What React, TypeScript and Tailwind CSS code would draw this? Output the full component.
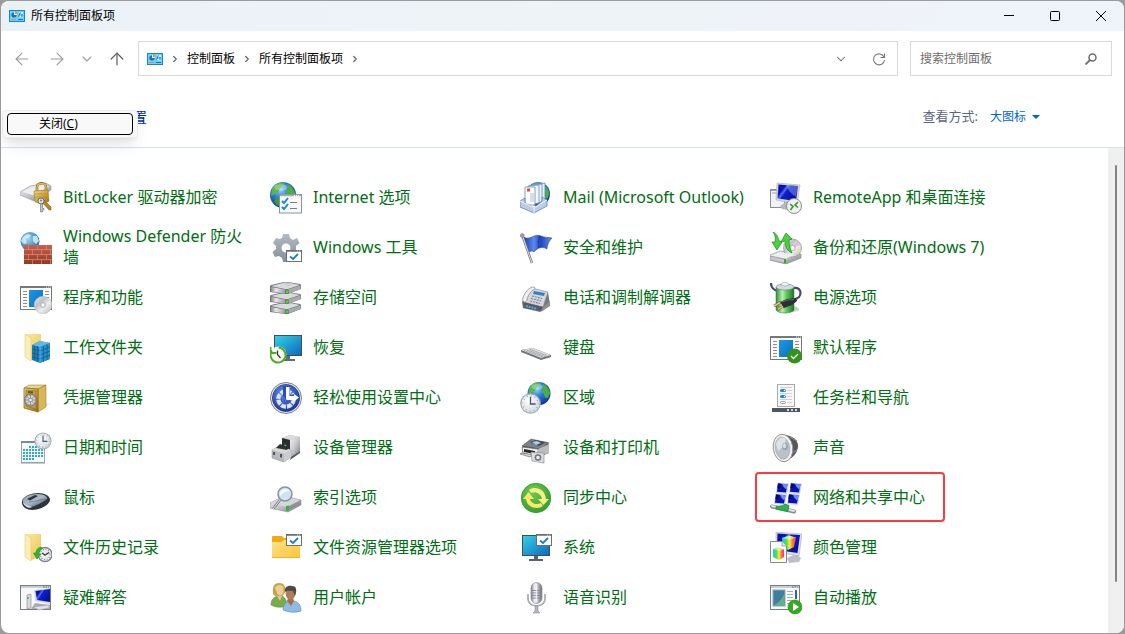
import type { ReactNode } from "react";
import { ArrowLeft, ArrowRight, ArrowUp, ChevronDown, ChevronRight } from "lucide-react";

function Icon({ children }: { children: ReactNode }) {
  return (
    <svg viewBox="0 0 32 32" className="size-8 shrink-0" aria-hidden="true">
      {children}
    </svg>
  );
}

/* Gradients shared by all icons */
function SharedDefs() {
  return (
    <svg className="absolute size-0" aria-hidden="true">
      <defs>
        <linearGradient id="silver" x1="0" y1="0" x2="1" y2="1">
          <stop offset="0" stopColor="#f4f4f6" />
          <stop offset="0.5" stopColor="#c4c5c9" />
          <stop offset="1" stopColor="#77797e" />
        </linearGradient>
        <linearGradient id="drive" x1="0" y1="0" x2="1" y2="0">
          <stop offset="0" stopColor="#8b8c90" />
          <stop offset="0.3" stopColor="#e9e9eb" />
          <stop offset="1" stopColor="#828387" />
        </linearGradient>
        <linearGradient id="steel" x1="0" y1="0" x2="0" y2="1">
          <stop offset="0" stopColor="#b3bac3" />
          <stop offset="1" stopColor="#858d98" />
        </linearGradient>
        <linearGradient id="gold" x1="0" y1="0" x2="1" y2="1">
          <stop offset="0" stopColor="#f2da83" />
          <stop offset="0.5" stopColor="#cfa63c" />
          <stop offset="1" stopColor="#94691a" />
        </linearGradient>
        <linearGradient id="folder" x1="0" y1="0" x2="1" y2="1">
          <stop offset="0" stopColor="#fde9a6" />
          <stop offset="1" stopColor="#ecc254" />
        </linearGradient>
        <linearGradient id="folderNew" x1="0" y1="0" x2="1" y2="1">
          <stop offset="0" stopColor="#ffe28a" />
          <stop offset="1" stopColor="#fcc433" />
        </linearGradient>
        <linearGradient id="screen" x1="0" y1="0" x2="1" y2="1">
          <stop offset="0" stopColor="#35d3e6" />
          <stop offset="1" stopColor="#0b67bf" />
        </linearGradient>
        <linearGradient id="navy" x1="0" y1="0" x2="1" y2="0.6">
          <stop offset="0" stopColor="#0a16a0" />
          <stop offset="0.3" stopColor="#0610b8" />
          <stop offset="0.42" stopColor="#4f74f0" />
          <stop offset="0.5" stopColor="#101fcb" />
          <stop offset="1" stopColor="#05109b" />
        </linearGradient>
        <linearGradient id="tile" x1="0" y1="0" x2="1" y2="1">
          <stop offset="0" stopColor="#1c97e6" />
          <stop offset="1" stopColor="#0b6fc4" />
        </linearGradient>
        <linearGradient id="brick" x1="0" y1="0" x2="0" y2="1">
          <stop offset="0" stopColor="#c9604c" />
          <stop offset="1" stopColor="#963724" />
        </linearGradient>
        <linearGradient id="battery" x1="0" y1="0" x2="1" y2="0">
          <stop offset="0" stopColor="#2f8d38" />
          <stop offset="0.35" stopColor="#b5f0ae" />
          <stop offset="0.6" stopColor="#5cc659" />
          <stop offset="1" stopColor="#1c7726" />
        </linearGradient>
        <linearGradient id="flag" x1="0" y1="0" x2="1" y2="0">
          <stop offset="0" stopColor="#1c3bb0" />
          <stop offset="0.35" stopColor="#5f8af0" />
          <stop offset="0.6" stopColor="#1f43bd" />
          <stop offset="1" stopColor="#6a94ee" />
        </linearGradient>
        <linearGradient id="spectrum" x1="0" y1="0" x2="1" y2="0">
          <stop offset="0" stopColor="#12d8ea" />
          <stop offset="0.3" stopColor="#3fe05c" />
          <stop offset="0.55" stopColor="#f7ee35" />
          <stop offset="0.8" stopColor="#ff6a2b" />
          <stop offset="1" stopColor="#f02bb0" />
        </linearGradient>
        <linearGradient id="disc" x1="0" y1="0" x2="1" y2="1">
          <stop offset="0" stopColor="#ededee" />
          <stop offset="0.35" stopColor="#bfc2c3" />
          <stop offset="0.6" stopColor="#eeeeef" />
          <stop offset="1" stopColor="#b0b3b5" />
        </linearGradient>
        <linearGradient id="mouse" x1="0" y1="0" x2="1" y2="1">
          <stop offset="0" stopColor="#8d9cb0" />
          <stop offset="0.5" stopColor="#aab8c8" />
          <stop offset="1" stopColor="#3d4651" />
        </linearGradient>
        <linearGradient id="mic" x1="0" y1="0" x2="1" y2="0">
          <stop offset="0" stopColor="#81818c" />
          <stop offset="0.35" stopColor="#f7f7fc" />
          <stop offset="1" stopColor="#6b6b78" />
        </linearGradient>
        <radialGradient id="globe" cx="0.4" cy="0.3" r="0.75">
          <stop offset="0" stopColor="#8fd4fa" />
          <stop offset="0.45" stopColor="#2a78d6" />
          <stop offset="1" stopColor="#0b2f8e" />
        </radialGradient>
        <radialGradient id="paleGlobe" cx="0.4" cy="0.35" r="0.7">
          <stop offset="0" stopColor="#9bd5ef" />
          <stop offset="1" stopColor="#1c6ea8" />
        </radialGradient>
        <radialGradient id="dial" cx="0.4" cy="0.35" r="0.75">
          <stop offset="0" stopColor="#ffffff" />
          <stop offset="1" stopColor="#cad4dd" />
        </radialGradient>
        <radialGradient id="access" cx="0.4" cy="0.3" r="0.8">
          <stop offset="0" stopColor="#5e8be6" />
          <stop offset="1" stopColor="#122f96" />
        </radialGradient>
        <radialGradient id="green" cx="0.4" cy="0.3" r="0.8">
          <stop offset="0" stopColor="#6ecb52" />
          <stop offset="1" stopColor="#2c9a2b" />
        </radialGradient>
      </defs>
    </svg>
  );
}

/* Small parts that several icons reuse */
function Globe({ cx, cy, r }: { cx: number; cy: number; r: number }) {
  return (
    <g transform={`translate(${cx} ${cy}) scale(${r / 12})`}>
      <circle r="12" fill="url(#globe)" />
      <path d="M-10 -6C-7 -11 -2 -12 1 -11L0 -8L-3 -6L-4 -3L-8 -1L-11 1Z" fill="#58b848" />
      <path d="M4 -10C8 -9 11 -4 11.500 0L9 5L6 4L5 0L2 -2L4 -6Z" fill="#4cae42" />
      <path d="M-7 2L-2 3L1 6L-2 11L-6 9L-8 6Z" fill="#3c9c3a" />
      <ellipse cx="-2" cy="-7" rx="6" ry="3" fill="#fff" opacity="0.3" />
    </g>
  );
}

function Clock({ cx, cy, r }: { cx: number; cy: number; r: number }) {
  return (
    <g transform={`translate(${cx} ${cy}) scale(${r / 10})`}>
      <circle r="9.500" fill="url(#dial)" stroke="#a3acb4" strokeWidth="1.200" />
      <circle r="7.500" fill="none" stroke="#8b98a5" strokeWidth="1.200" strokeDasharray="0.800 3.127" />
      <path d="M0 -6.500V0.500H5" fill="none" stroke="#44566a" strokeWidth="1.300" />
    </g>
  );
}

function CheckWindow({ x, y }: { x: number; y: number }) {
  return (
    <g transform={`translate(${x} ${y})`}>
      <rect x="0.500" y="0.500" width="15" height="11" fill="#fff" stroke="#6d6d6d" />
      <path d="M0.500 1H15.500" stroke="#6d6d6d" strokeWidth="1.500" />
      <path d="M11 1H15" stroke="#ddd" strokeDasharray="1 1" />
      <path d="M4 6.500L7 9L12 4" fill="none" stroke="#1280d6" strokeWidth="1.800" />
    </g>
  );
}

function ProgramWindow() {
  return (
    <>
      <rect x="0.500" y="4.500" width="31" height="23" fill="#fbfbfb" stroke="#777" />
      <path d="M0 5H32" stroke="#777" strokeWidth="2" />
      <path d="M26 5H31" stroke="#eee" strokeDasharray="1 1" />
      <path d="M3 9.500H7M3 12.500H7M3 15.500H7M3 18.500H7M3 21.500H7M3 24.500H7M25 9.500H29M25 12.500H29M25 15.500H29" stroke="#8d8d8d" />
      <rect x="9" y="8" width="14" height="17" fill="url(#tile)" />
    </>
  );
}

function OldFolder() {
  return (
    <>
      <path d="M5 2H21V25L11 28Z" fill="url(#folder)" />
      <path d="M5 2L11 6V29L5 25Z" fill="#fdeeb8" stroke="#e3bd5c" strokeWidth="0.500" />
    </>
  );
}

const icons: Record<string, ReactNode> = {
  bitlocker: (
    <>
      <path d="M0 10L10 4L26 1L31 4V8L14 19L0 13Z" fill="url(#silver)" stroke="#96989c" strokeWidth="0.600" />
      <path d="M2 10L11 5L26 2.500L29 5L13 13Z" fill="#edeef2" />
      <path d="M17 9V5C17 0 26 0 26 5V9" fill="none" stroke="#8a6a22" strokeWidth="2.600" />
      <path d="M17 9V5C17 0.500 26 0.500 26 5V9" fill="none" stroke="#e4c768" strokeWidth="1.200" />
      <path d="M14 9L28 8L29 19L24 22L15 20Z" fill="url(#gold)" stroke="#8f6b1c" strokeWidth="0.500" />
      <path d="M15 12H28M15 15H28" stroke="#b48a2c" strokeWidth="0.600" />
      <path d="M24 18L31 25V28H29L22 20Z" fill="#b98520" stroke="#7b5510" strokeWidth="0.500" />
      <circle cx="21" cy="19" r="3" fill="#e2e3e6" stroke="#6b6e75" />
      <circle cx="21" cy="18.500" r="1" fill="#73767c" />
      <path d="M20.500 22V30H22.500V28H24V26.500H22.500V22Z" fill="#c3c5ca" stroke="#6b6e75" strokeWidth="0.600" />
    </>
  ),
  firewall: (
    <>
      <circle cx="10" cy="9.500" r="9.500" fill="url(#paleGlobe)" />
      <path d="M3 5L7 2L11 3L9 6L6 7L7 11L4 12L1 9ZM13 4L17 4L19 9L16 12L13 9Z" fill="#d5eef8" opacity="0.850" />
      <rect x="4" y="13" width="28" height="19" fill="#d08f80" />
      <path
        d="M4 13H8.300V17.300H4ZM9 13H17.300V17.300H9ZM18 13H26.300V17.300H18ZM27 13H32V17.300H27ZM4 18H12.300V22.300H4ZM13 18H21.300V22.300H13ZM22 18H30.300V22.300H22ZM31 18H32V22.300H31ZM4 23H8.300V27.300H4ZM9 23H17.300V27.300H9ZM18 23H26.300V27.300H18ZM27 23H32V27.300H27ZM4 28H12.300V32H4ZM13 28H21.300V32H13ZM22 28H30.300V32H22ZM31 28H32V32H31Z"
        fill="url(#brick)"
      />
    </>
  ),
  programs: (
    <>
      <ProgramWindow />
      <circle cx="23" cy="23" r="8.800" fill="url(#disc)" stroke="#b9bcbd" strokeWidth="0.500" />
      <circle cx="23" cy="23" r="2.600" fill="#dadcdd" stroke="#a6a9aa" strokeWidth="0.600" />
      <circle cx="23" cy="23" r="1.200" fill="#fff" />
    </>
  ),
  workFolders: (
    <>
      <OldFolder />
      <path d="M12 13L20 9L30 11V27L20 31L12 28Z" fill="#1c7fb8" />
      <path d="M12 13L20 9L30 11L20 15Z" fill="#63b9df" />
      <path d="M20 15L30 11V27L20 31Z" fill="#2b93cb" />
      <path d="M12 17L20 19L30 15M12 21L20 23L30 19M12 25L20 27L30 23M14.500 13.500V28.500M17.500 14V30M23.500 14V29.500M27 12.500V28" fill="none" stroke="#0e5c93" strokeWidth="0.800" />
      <path d="M20 15V31" stroke="#8fd0ec" strokeWidth="0.600" />
    </>
  ),
  credentials: (
    <>
      <path d="M20 29L30 21L26 22Z" fill="#ddd" />
      <path d="M4 6L9 3H26L18 7Z" fill="#e6d494" stroke="#927425" strokeWidth="0.500" />
      <path d="M18 7L26 3V25L18 30Z" fill="#d9b658" stroke="#927425" strokeWidth="0.500" />
      <path d="M4 6L18 7V30L4 26Z" fill="url(#gold)" stroke="#7e611b" strokeWidth="0.700" />
      <path d="M6 8L16 9V27L6 24Z" fill="#c09c47" stroke="#8c6d27" strokeWidth="0.600" />
      <path d="M8 9L13 9.500V11.500L8 11Z" fill="#6c5722" />
      <circle cx="10.500" cy="18" r="6" fill="#a5a7ab" stroke="#66686d" strokeWidth="0.700" />
      <circle cx="10.500" cy="18" r="4.500" fill="#dcdde0" />
      <path d="M10.500 13V23M5.500 18H15.500M7 14.500L14 21.500M14 14.500L7 21.500" stroke="#71747a" strokeWidth="0.800" />
      <circle cx="10.500" cy="18" r="1.800" fill="#ecedef" stroke="#66686d" strokeWidth="0.500" />
    </>
  ),
  date: (
    <>
      <path d="M1.500 9.500H24.500V30.500H1.500Z" fill="#f4f9fc" stroke="#9ca7af" />
      <path d="M1 10H25" stroke="#7e8a93" strokeWidth="2" />
      <path d="M9 15H23M3 18H23M3 21H23M3 24H23M3 27H15" stroke="#2fa8cd" strokeWidth="2" strokeDasharray="2 1" />
      <path d="M1 31H25" stroke="#8f9aa2" />
      <Clock cx={23} cy={9} r={8.5} />
    </>
  ),
  mouse: (
    <>
      <path d="M2 19C3 15 10 11 18 11C25 11 30 14 30 18C30 22 21 28 12 28C6 28 1 24 2 19Z" fill="#2d343d" />
      <path d="M3 18C5 14 11 12 18 12C24 12 28 15 27 17C22 21 15 24 11 25C6 25 2 22 3 18Z" fill="url(#mouse)" />
      <path d="M3 20C5 24 10 24 12 25C10 27 4 25 3 20Z" fill="#dbe1e8" />
      <path d="M7 17L15 13L18 14L10 18.500Z" fill="#2a323d" />
      <path d="M9 20C15 20 21 17 26 17" stroke="#66717f" strokeWidth="0.700" fill="none" />
    </>
  ),
  fileHistory: (
    <>
      <OldFolder />
      <circle cx="25" cy="22.500" r="7" fill="#e9ebec" stroke="#7f8488" strokeWidth="1.400" />
      <circle cx="25" cy="22.500" r="5" fill="none" stroke="#6c7276" strokeWidth="1.200" strokeDasharray="0.700 1.918" />
      <path d="M22 21L25 23L29 20.500" fill="none" stroke="#333" strokeWidth="1.100" />
      <path d="M21 15C17 16 16 19 16 21H13.500L17 27L21 22H19C19 20 20 18 22 17Z" fill="#2fb52b" stroke="#168116" strokeWidth="0.500" />
    </>
  ),
  troubleshoot: (
    <>
      <rect x="0.500" y="3.500" width="30" height="24" fill="#f7f8fa" stroke="#767d87" />
      <rect x="1" y="4" width="29" height="2" fill="#c6ced8" />
      <path d="M23 5H29" stroke="#657080" strokeDasharray="1.500 1" />
      <path d="M11 27L15 21L30 23V27Z" fill="#a9abb0" />
      <path d="M14 8L30 6V22L15 19Z" fill="#d3d6dc" />
      <path d="M15.500 9L30 7V20L17 18Z" fill="url(#navy)" />
      <path d="M13 25L29 23V26L19 28Z" fill="#e1e2e4" stroke="#9b9da1" strokeWidth="0.500" />
      <path d="M7 13L11 12V26L7 27Z" fill="#d7d8db" stroke="#85878c" strokeWidth="0.600" />
      <path d="M8 15V17" stroke="#25b52a" strokeWidth="1.300" />
    </>
  ),
  internet: (
    <>
      <Globe cx={13} cy={13} r={13} />
      <rect x="9.500" y="12.500" width="22" height="18.500" fill="#f8fafc" stroke="#8e9399" />
      <path d="M10 13.500H31" stroke="#a6acb4" strokeWidth="1.500" />
      <path d="M24 13.500H30" stroke="#fff" strokeDasharray="1 1" />
      <path d="M12 19L14 21L18 16M12 25L14 27L18 22" fill="none" stroke="#1789cf" strokeWidth="1.900" />
      <path d="M20 20.500H27M20 26.500H27" stroke="#747b83" />
    </>
  ),
  tools: (
    <>
      <path
        fillRule="evenodd"
        d="M13 2H19L20 6L23 8L27 6L29.500 11L26 14V18L29 21L26 26L22 25L19 27V30H13L12 26L9 24L5 25L2.500 20L6 17V14L3 11L6 6L10 7L12 6ZM16 11.500A4.500 4.500 0 1 0 16 20.500A4.500 4.500 0 1 0 16 11.500Z"
        fill="url(#steel)"
      />
      <CheckWindow x={16} y={18} />
    </>
  ),
  storage: (
    <>
      {[20, 10, 0].map((y) => (
        <g key={y} transform={`translate(0 ${y})`}>
          <path d="M0 4Q0 3.500 1 3L14 0H18L30 2Q31 2.500 31 3V7L18 12H15L0 10Z" fill="#75767a" />
          <path d="M1 4L15 0.500H18L30 3L18 7H15Z" fill="#d9dadc" />
          <path d="M1 5L15 7.500H18V11.500H15L1 9.500Z" fill="url(#drive)" />
          <path d="M18 7.500L30.500 3.500V7L18 11.500Z" fill="#a9aaae" />
          <path d="M15.500 7.800H18.500V11.500H15.500Z" fill="#3c6e2c" />
          <ellipse cx="17" cy="9.700" rx="1.200" ry="1.600" fill="#4ad62c" />
        </g>
      ))}
      <ellipse cx="18" cy="2.300" rx="2" ry="0.800" fill="#fff" stroke="#909195" strokeWidth="0.500" />
    </>
  ),
  recovery: (
    <>
      <path d="M16 24H20V27H25V29H13V27H16Z" fill="#636a72" />
      <rect x="4.500" y="3.500" width="27" height="20" fill="url(#screen)" stroke="#454c55" />
      <circle cx="8.500" cy="22.500" r="8" fill="#fff" />
      <path d="M2 18.500A7.500 7.500 0 1 0 8.500 15.500" fill="none" stroke="#4fae18" strokeWidth="2" />
      <circle cx="8.500" cy="23" r="5.500" fill="#f6f7f7" />
      <path d="M0.500 15V21H6.500" fill="none" stroke="#4fae18" strokeWidth="1.900" />
      <path d="M7.500 18.500V22.500L10.500 26" fill="none" stroke="#333" strokeWidth="1.200" />
    </>
  ),
  ease: (
    <>
      <circle cx="16" cy="16" r="15.500" fill="#e9eaee" stroke="#7b7e89" />
      <circle cx="16" cy="16" r="13.600" fill="url(#access)" stroke="#1a2d77" strokeWidth="0.700" />
      <circle cx="16" cy="17" r="7.700" fill="none" stroke="#dfe5f8" strokeWidth="4.200" strokeDasharray="5 1.050" />
      <path d="M13 4H20V13L27 11.500L29 15L26 18H17L13 14Z" fill="#2451bd" />
      <path d="M16 5H19.500V14H24V12L29 15.500L24 19.500V18H17Q16 18 16 16Z" fill="#fff" />
    </>
  ),
  deviceManager: (
    <>
      <path d="M22 22L30 18V21L20 28Z" fill="#55575b" />
      <path d="M12 6L20 3L30 5V19L21 25L12 21Z" fill="#a7a9ad" />
      <path d="M12 6L20 3L30 5L20 8Z" fill="#dcdcdf" />
      <path d="M20 8L30 5V19L20 25Z" fill="url(#silver)" />
      <path d="M12 6L20 8V20L12 16Z" fill="#2b2d30" />
      <path d="M14 12.500L16.500 13V15L14 14.500Z" fill="#32cf36" />
      <path d="M2 18L9 14L21 18V25L14 30L2 26Z" fill="#b9babe" stroke="#85878b" strokeWidth="0.500" />
      <path d="M2 18L9 14L21 18L14 21.500Z" fill="#d9d9dc" />
      <path d="M14 21.500L21 18V25L14 30Z" fill="#cbccd0" />
      <path d="M6 16L10 12L19 15L17 18Z" fill="#2f3134" />
      <path d="M4 20V23M11 22V25.500" stroke="#393b3f" strokeWidth="1.600" />
    </>
  ),
  indexing: (
    <>
      <path d="M0 21L14 14L31 18V23L18 30L0 26Z" fill="url(#silver)" stroke="#7c7e82" strokeWidth="0.500" />
      <path d="M1 21L14 15L30 18L17 25Z" fill="#d6d7da" />
      <path d="M17 25V29.500L31 22.500V18.500Z" fill="#8f9195" />
      <path d="M16 24L19 23.500V28L16 29Z" fill="#2fb92c" />
      <path d="M10 18L3 27" stroke="#7c8087" strokeWidth="2.600" />
      <path d="M10 18L3 27" stroke="#e0e2e6" />
      <circle cx="15" cy="12" r="7" fill="#cfe3f7" stroke="#8c9198" strokeWidth="1.500" />
      <path d="M10 11C11 7 17 6 20 9C17 9 13 10 10 14Z" fill="#f6fbff" />
    </>
  ),
  explorerOptions: (
    <>
      <path d="M2 5Q2 4 3 4H12L14 6H30V12H2Z" fill="#efab12" />
      <path d="M2 10H11L14 8H30V25Q30 26 29 26H3Q2 26 2 25Z" fill="url(#folderNew)" />
      <path d="M2 25.500H30" stroke="#e9ae2f" strokeWidth="0.800" />
      <CheckWindow x={16} y={2} />
    </>
  ),
  users: (
    <>
      <path d="M1 23C1 17 4 15 8 14H12C16 16 17 20 17 24Q8 27 1 23Z" fill="#76ac4b" stroke="#55822f" strokeWidth="0.500" />
      <path d="M3 12C2 4 5 1 9 1C14 1 16 4 15 11L12 14H5Z" fill="#c5a24a" />
      <ellipse cx="10" cy="8.500" rx="3.600" ry="5" fill="#f0c8a0" />
      <path d="M5 6C7 2 12 2 14 6C10 5 8 6 6 9Z" fill="#e8d483" />
      <path d="M7 14L10 19L12 14Z" fill="#edc29a" />
      <path d="M13 28C13 22 16 20 20 19H24C29 20 31 24 31 29Q22 32 13 28Z" fill="#8ebbe5" stroke="#5b87b4" strokeWidth="0.600" />
      <path d="M17 19L21 24L24 19L23 16H18Z" fill="#a97048" />
      <ellipse cx="20.500" cy="11.500" rx="4.800" ry="6.200" fill="#b07c57" />
      <path d="M15 10C14 5 18 3 22 4C27 4 27 9 25 14L23 9C20 9 17 8 15 10Z" fill="#4a4b4e" />
    </>
  ),
  mail: (
    <>
      <Globe cx={18} cy={12} r={12} />
      <path d="M14 2L25 1V19L14 21Z" fill="#e4effc" stroke="#5179b8" strokeWidth="0.700" />
      <path d="M11 3L22 2V20L11 22Z" fill="#edf4fd" stroke="#5179b8" strokeWidth="0.700" />
      <path d="M8 4L19 3V21L8 23Z" fill="#f4f8fe" stroke="#5179b8" strokeWidth="0.700" />
      <path d="M5 5L15 5V23L5 23Z" fill="#fff" stroke="#5179b8" strokeWidth="0.700" />
      <rect x="7" y="6.500" width="3" height="3" fill="#e34b27" />
      <path d="M11 11V20M13 11V20" stroke="#97acd0" strokeWidth="0.800" />
      <path d="M0 19L5 16V21L14 26L22 19V15L27 18V24L14 31L0 25Z" fill="#b9cdea" stroke="#5b76a3" strokeWidth="0.700" />
      <path d="M0 19L14 26L27 18M14 26V31" fill="none" stroke="#edf3fb" />
    </>
  ),
  flag: (
    <>
      <path d="M4 5C10 9 14 1 21 4C25 6 28 5 32 6C29 9 27 13 27 17C22 14 17 16 14 20C12 18 10 20 8 20Z" fill="url(#flag)" stroke="#17307f" strokeWidth="0.500" />
      <path d="M20 4C18 8 18 12 19 16" stroke="#132e91" strokeWidth="1.300" fill="none" opacity="0.600" />
      <path d="M2.500 4L12 31" stroke="#77797e" strokeWidth="2.400" />
      <path d="M2.500 4L12 31" stroke="#e1e2e5" strokeWidth="0.900" />
      <circle cx="2.200" cy="3.500" r="1.900" fill="#a1a3a8" stroke="#6a6c70" strokeWidth="0.500" />
    </>
  ),
  phone: (
    <>
      <path d="M2 20L10 7L28 10L30 23L20 30L3 26Z" fill="#76787d" />
      <path d="M3 20L12 6L28 10L23 25Z" fill="#d6d7da" stroke="#797b80" strokeWidth="0.500" />
      <path d="M3 20L23 25L21 29L4 26Z" fill="#515b66" />
      <path d="M6 24L17 27" stroke="#4aa6dc" strokeWidth="2.300" strokeDasharray="2 0.800" />
      <path d="M23 25L30 19V24L21 30Z" fill="#8c8e93" />
      <path d="M14 9L25 11L24 14L13 12Z" fill="#2f83cc" />
      <path d="M12 14L22 16.500M11 16.500L21 19M10 19L20 21.500" stroke="#7e8186" strokeWidth="1.200" strokeDasharray="2 1" />
      <path d="M3 19C1 16 8 5 13 5C16 5 15 8 13 8C11 9 7 15 7 18C6 20 4 21 3 19Z" fill="#efeff1" stroke="#7f8186" strokeWidth="0.700" />
    </>
  ),
  keyboard: (
    <>
      <path d="M1 18L13 16L31 23V25L21 28L1 20Z" fill="#707377" />
      <path d="M1 18L13 16L31 23L21 26Z" fill="#d8dadc" />
      <path d="M4 18.500L23 25M7 18L25 24.500M10 17.500L27 23.500" stroke="#909398" strokeWidth="0.900" strokeDasharray="1.500 0.700" />
    </>
  ),
  region: (
    <>
      <Globe cx={19} cy={11.5} r={11.5} />
      <Clock cx={10.5} cy={21.5} r={10.2} />
    </>
  ),
  printers: (
    <>
      <path d="M2 15L10 8L27 10L29 13V21L17 26L3 22Z" fill="#56595e" />
      <path d="M2 14L11 7L29 11L20 17Z" fill="#7c8187" stroke="#45484d" strokeWidth="0.500" />
      <path d="M10 10L16 8L25 10.500L19 14Z" fill="#3e4a58" />
      <path d="M12 10L17 9L21 11L16 13Z" fill="#a9cdec" />
      <path d="M2 15L18 17V25L3 21Z" fill="#f0f0f0" stroke="#55585d" strokeWidth="0.600" />
      <path d="M4 17L15 19V22L4 20Z" fill="#26282b" />
      <path d="M1 21L12 22.500L10 25L0 22Z" fill="#d7d8da" stroke="#5c5f64" strokeWidth="0.600" />
      <path d="M18 17L29 12V21L18 25Z" fill="#babcc0" />
      <path d="M11 20L24 21V31L12 29Z" fill="#dcdde0" stroke="#7a7c81" strokeWidth="0.600" />
      <circle cx="18" cy="25.500" r="4" fill="#77797e" stroke="#fff" strokeWidth="0.700" />
      <circle cx="18" cy="25.500" r="1.800" fill="#eeeff0" />
    </>
  ),
  sync: (
    <>
      <circle cx="16" cy="16" r="15" fill="url(#green)" />
      <circle cx="16" cy="16" r="14.500" fill="none" stroke="#3c9e33" strokeWidth="0.800" />
      <path d="M9 8C14 4 25 6 26 17H29L23.500 23L18 17H22C21 11 15 9 11 11Z" fill="#f9ec89" />
      <path d="M23 24C18 28 7 26 6 17H3L8.500 10L14 17H10C11 22 17 23 21 21Z" fill="#ffe66b" />
    </>
  ),
  system: (
    <>
      <path d="M14 24H18V27H23V29H9V27H14Z" fill="#59616a" />
      <rect x="2.500" y="3.500" width="27" height="20" fill="url(#screen)" stroke="#454c55" />
      <CheckWindow x={16} y={2} />
    </>
  ),
  speech: (
    <>
      <path d="M8 12V17C8 26 25 26 25 17V12" fill="none" stroke="#8e8e98" strokeWidth="1.600" />
      <path d="M8 12V17C8 25.500 25 25.500 25 17V12" fill="none" stroke="#e8e8ed" strokeWidth="0.500" />
      <rect x="11" y="0.500" width="11" height="21" rx="5.500" fill="url(#mic)" stroke="#85858f" strokeWidth="0.600" />
      <path d="M11 8.500H22M11 11H22M11 13.500H22M11 16H22" stroke="#888894" />
      <path d="M16.500 2V20" stroke="#fff" strokeWidth="1.500" opacity="0.700" />
      <path d="M15 24H18V29L20 31H13L15 29Z" fill="#b7b7c0" stroke="#7f7f8b" strokeWidth="0.500" />
    </>
  ),
  remoteApp: (
    <>
      <rect x="0.500" y="7.500" width="14" height="18" fill="#f1f2f3" stroke="#898e95" />
      <path d="M1 8.500H8M2 11H7" stroke="#9ba5b2" />
      <path d="M10 24L17 19L26 22L22 29L12 27Z" fill="#b7b9bd" />
      <path d="M7 1L30 3L27 22L6 18Z" fill="#d9dce2" stroke="#9aa0a9" strokeWidth="0.500" />
      <path d="M8.500 2.500L28 4L26 19L7.500 16.500Z" fill="url(#navy)" />
      <path d="M16 3L28 4L26 15C21 12 18 8 16 3Z" fill="#a9c4fa" opacity="0.400" />
      <circle cx="24" cy="24" r="7.500" fill="#f1f1f1" stroke="#8b8c8e" />
      <path d="M20 22L23 24.500L20.500 28M28 20L25 23L28 25.500" fill="none" stroke="#2b9a32" strokeWidth="1.600" />
    </>
  ),
  backup: (
    <>
      <path d="M0 23L10 19L31 22V26L16 32L0 28Z" fill="url(#silver)" stroke="#77797d" strokeWidth="0.500" />
      <circle cx="22.500" cy="16" r="9" fill="url(#disc)" stroke="#8f9194" strokeWidth="0.700" />
      <path d="M22.500 16L28 9L31 13Z" fill="#e7a5c9" opacity="0.600" />
      <path d="M22.500 16L31 18L28 22Z" fill="#f2e297" opacity="0.700" />
      <circle cx="22.500" cy="16" r="2.600" fill="#fff" stroke="#8f9194" strokeWidth="0.700" />
      <path d="M0 24L10 20L24 23L15 27Z" fill="#eff0f1" />
      <path d="M0 24L15 27V31.500L0 28Z" fill="#c5c7ca" stroke="#77797d" strokeWidth="0.500" />
      <path d="M15 27V31" stroke="#2cae2a" strokeWidth="2" />
      <path d="M3 0C7 2 8 5 9 9L12 10L7 18L2 10L5 10C6 6 5 3 3 0Z" fill="#4bd13c" stroke="#188b18" strokeWidth="0.700" />
      <path d="M22 21C17 19 15 14 15 9L11 10L16 1L22 7L19 8C19 13 20 17 22 21Z" fill="#4bd13c" stroke="#188b18" strokeWidth="0.700" />
    </>
  ),
  power: (
    <>
      <ellipse cx="22" cy="27" rx="7" ry="3" fill="#ccc" />
      <path d="M1 1C1 5 3 8 8 9M24 6C33 5 32 16 25 17" fill="none" stroke="#474b61" strokeWidth="2.200" />
      <path d="M6 5V28C8 32 22 32 24 28V5Z" fill="url(#battery)" stroke="#3e7744" strokeWidth="0.500" />
      <ellipse cx="15" cy="5" rx="9" ry="3" fill="#d3dbe1" stroke="#7b858b" strokeWidth="0.700" />
      <path d="M11 3C11 -0.500 19 -0.500 19 3Q15 5 11 3Z" fill="#eff3f6" stroke="#879197" strokeWidth="0.500" />
      <path d="M4 24L11 20M8 27L14 24" stroke="#8c6a2a" strokeWidth="2.600" />
      <path d="M4 24L11 20M8 27L14 24" stroke="#f2dfae" strokeWidth="1.200" />
      <path d="M10 20L17 17L26 16L27 19L22 23L14 26Z" fill="#2b2e36" />
      <path d="M12 20L18 18L24 17.500" stroke="#737887" strokeWidth="0.800" fill="none" />
    </>
  ),
  defaults: (
    <>
      <ProgramWindow />
      <circle cx="24.500" cy="24" r="7.500" fill="#32921a" />
      <path d="M21 24L23.500 26.500L28 22" fill="none" stroke="#fff" strokeWidth="1.300" />
    </>
  ),
  taskbar: (
    <>
      <rect x="7.500" y="2.500" width="17" height="22" fill="#f8f8f8" stroke="#a8a8a8" />
      <path d="M10 5.500H22M17 8.500H22M10 11.500H22M17 14.500H22M10 17.500H22M17 20.500H22" stroke="#d0d0d0" />
      <rect x="10" y="7" width="6" height="3" rx="1.500" fill="#1787d8" />
      <rect x="10" y="13" width="6" height="3" rx="1.500" fill="#1787d8" />
      <circle cx="14.500" cy="8.500" r="0.800" fill="#fff" />
      <circle cx="14.500" cy="14.500" r="0.800" fill="#fff" />
      <rect x="10.500" y="19.500" width="5" height="2" rx="1" fill="#fff" stroke="#777" strokeWidth="0.700" />
      <rect x="2" y="26" width="28" height="4" fill="#4d575f" />
      <path d="M17 28H27" stroke="#d7dbde" strokeWidth="2" strokeDasharray="2 2" />
    </>
  ),
  sound: (
    <>
      <path d="M14 3C22 3 28 8 28 14C28 21 22 27 16 28Z" fill="#54575b" />
      <path d="M20 5L27 9M22 21L27 18" stroke="#81858a" strokeWidth="1.200" />
      <ellipse cx="13" cy="16" rx="9.800" ry="13.800" fill="#f3f3f4" stroke="#8a8c90" strokeWidth="0.900" transform="rotate(-8 13 16)" />
      <ellipse cx="12.500" cy="16" rx="7.300" ry="11.200" fill="#b9c2c9" stroke="#a4a9ae" strokeWidth="0.700" transform="rotate(-8 13 16)" />
      <path d="M6 12C8 6 13 4 16 7L14 14L8 19Z" fill="#dde2e6" />
      <ellipse cx="15" cy="14.500" rx="2.800" ry="3.800" fill="#92a5b3" />
      <ellipse cx="14.500" cy="13.800" rx="1.700" ry="2.500" fill="#d3e0e9" />
    </>
  ),
  network: (
    <>
      {[
        [6, 1],
        [19, 1],
        [4, 12],
        [17, 12],
      ].map(([x, y]) => (
        <g key={`${x}-${y}`} transform={`translate(${x} ${y})`}>
          <path d="M1.500 -0.500L13 0.500L11 11L0 10Z" fill="#cdd3e2" />
          <path d="M2 0.500L11.500 1.200L10 9.500L1 8.800Z" fill="#0812b4" />
          <path d="M6 0.800L11.500 1.200L10.500 6.500C8.500 5.500 7 3.500 6 0.800Z" fill="#6f8ef2" />
          <path d="M2 0.500L5 0.700L4 5L1.400 5Z" fill="#050a68" />
        </g>
      ))}
      <path d="M2 24.500L24 29.500" stroke="#858b90" strokeWidth="4" strokeLinecap="round" />
      <path d="M2 24L24 29" stroke="#dfe3e5" strokeWidth="2" strokeLinecap="round" />
      <path d="M6 24.500L13 23.500L15 22L19 23.500L18 29.500L13 28.500L6 27Z" fill="#2bb34b" stroke="#167a31" strokeWidth="0.600" />
    </>
  ),
  color: (
    <>
      <path d="M17 26L26 22L31 26L29 30L19 31Z" fill="#bcbfc4" />
      <path d="M6 0L32 2L29 24L6 20Z" fill="#dadde3" stroke="#9ea4ad" strokeWidth="0.500" />
      <path d="M7.500 1.500L30 3L27.500 21L7 18Z" fill="url(#navy)" />
      <path d="M12 6L19 3.500L26 5.500L24 15L18 18L13 15Z" fill="url(#spectrum)" />
      <path d="M12 6L19 3.500L26 5.500L19 8Z" fill="#fff" opacity="0.450" />
      <path d="M0.500 9.500H12L16.500 14V30.500H0.500Z" fill="#fdfdfd" stroke="#85888d" />
      <path d="M12 9.500V14H16.500" fill="#e2e3e6" stroke="#85888d" strokeWidth="0.700" />
      <path d="M3 17L8 15.500L14 17.500V25L9 28L3 25Z" fill="url(#spectrum)" />
      <path d="M3 17L8 15.500L14 17.500L9 19Z" fill="#fff" opacity="0.450" />
    </>
  ),
  autoplay: (
    <>
      <rect x="0.500" y="3.500" width="29" height="24" fill="#f7f8fa" stroke="#767d87" />
      <rect x="1" y="4" width="28" height="2" fill="#c6ced8" />
      <path d="M22 5H28" stroke="#657080" strokeDasharray="1.500 1" />
      <rect x="3" y="8" width="12" height="16" fill="#3d7fa2" stroke="#9aa7ae" />
      <path d="M4 23C9 21 13 16 14.500 11V23.500H4Z" fill="#64b189" />
      <path d="M17 9.500H23M17 12.500H23M17 15.500H23M17 18.500H23M17 21.500H20" stroke="#a5a9ae" />
      <path d="M26 8V17" stroke="#395f94" strokeWidth="2" />
      <circle cx="25" cy="25" r="7" fill="#35ab1f" stroke="#228013" strokeWidth="0.600" />
      <path d="M23 21L29 25L23 29Z" fill="#fff" />
    </>
  ),
};

const items: { label: string; icon: string; marked?: boolean }[] = [
  { label: "BitLocker 驱动器加密", icon: "bitlocker" },
  { label: "Internet 选项", icon: "internet" },
  { label: "Mail (Microsoft Outlook)", icon: "mail" },
  { label: "RemoteApp 和桌面连接", icon: "remoteApp" },
  { label: "Windows Defender 防火墙", icon: "firewall" },
  { label: "Windows 工具", icon: "tools" },
  { label: "安全和维护", icon: "flag" },
  { label: "备份和还原(Windows 7)", icon: "backup" },
  { label: "程序和功能", icon: "programs" },
  { label: "存储空间", icon: "storage" },
  { label: "电话和调制解调器", icon: "phone" },
  { label: "电源选项", icon: "power" },
  { label: "工作文件夹", icon: "workFolders" },
  { label: "恢复", icon: "recovery" },
  { label: "键盘", icon: "keyboard" },
  { label: "默认程序", icon: "defaults" },
  { label: "凭据管理器", icon: "credentials" },
  { label: "轻松使用设置中心", icon: "ease" },
  { label: "区域", icon: "region" },
  { label: "任务栏和导航", icon: "taskbar" },
  { label: "日期和时间", icon: "date" },
  { label: "设备管理器", icon: "deviceManager" },
  { label: "设备和打印机", icon: "printers" },
  { label: "声音", icon: "sound" },
  { label: "鼠标", icon: "mouse" },
  { label: "索引选项", icon: "indexing" },
  { label: "同步中心", icon: "sync" },
  { label: "网络和共享中心", icon: "network", marked: true },
  { label: "文件历史记录", icon: "fileHistory" },
  { label: "文件资源管理器选项", icon: "explorerOptions" },
  { label: "系统", icon: "system" },
  { label: "颜色管理", icon: "color" },
  { label: "疑难解答", icon: "troubleshoot" },
  { label: "用户帐户", icon: "users" },
  { label: "语音识别", icon: "speech" },
  { label: "自动播放", icon: "autoplay" },
];

function PanelIcon() {
  return (
    <svg viewBox="0 0 16 12" className="h-3 w-4 shrink-0" aria-hidden="true">
      <rect x="0.500" y="0.500" width="15" height="11" fill="#6fd0f8" stroke="#0f86d6" />
      <circle cx="5" cy="5" r="3" fill="#d8f1fd" />
      <path d="M5 5V2.200A2.800 2.800 0 1 0 7.800 5Z" fill="#0d74cc" />
      <path d="M6 4V1.500A2.500 2.500 0 0 1 8.500 4Z" fill="#f58a1f" />
      <path d="M10.500 3H14M10.500 6.500H14" stroke="#fff" strokeWidth="1.400" />
      <path d="M9.500 6.500L11.500 2.500M13 4V7" stroke="#0d74cc" />
      <path d="M2 9.500H7" stroke="#f58a1f" strokeWidth="1.200" />
      <path d="M9 9.500H14" stroke="#0d74cc" strokeWidth="1.200" />
    </svg>
  );
}

function TitleBar() {
  return (
    <div className="flex h-[30px] items-stretch bg-gradient-to-r from-[#ebf2f7] via-[#eef3f8] to-[#eff3fa]">
      <div className="flex flex-1 items-center gap-1.5 pl-2">
        <PanelIcon />
        <h1 className="text-xs">所有控制面板项</h1>
      </div>
      <button aria-label="最小化" className="flex w-[46px] items-center justify-center">
        <svg viewBox="0 0 10 10" className="size-2.5">
          <path d="M0 4.500H10" stroke="#000" />
        </svg>
      </button>
      <button aria-label="最大化" className="flex w-[46px] items-center justify-center">
        <svg viewBox="0 0 10 10" className="size-2.5">
          <rect x="0.500" y="0.500" width="9" height="9" rx="1" fill="none" stroke="#000" />
        </svg>
      </button>
      <button aria-label="关闭" className="flex w-[46px] items-center justify-center">
        <svg viewBox="0 0 10 10" className="size-2.5">
          <path d="M0 0L10 10M10 0L0 10" stroke="#000" />
        </svg>
      </button>
    </div>
  );
}

function Toolbar() {
  return (
    <div className="flex h-[55px] items-center pr-3 pl-[11px]">
      <button aria-label="后退" className="mr-[15px] text-[#9a9a9a]">
        <ArrowLeft size={20} strokeWidth={1.3} />
      </button>
      <button aria-label="前进" className="mr-3 text-[#9a9a9a]">
        <ArrowRight size={20} strokeWidth={1.3} />
      </button>
      <button aria-label="最近的位置" className="mr-3 text-[#a0a0a0]">
        <ChevronDown size={16} strokeWidth={1.6} />
      </button>
      <button aria-label="向上" className="mr-[11px] text-[#606060]">
        <ArrowUp size={20} strokeWidth={1.5} />
      </button>

      {/* Address bar */}
      <nav className="flex h-[35px] flex-1 items-center gap-[7px] border border-[#d9d9d9] bg-white px-2 text-xs">
        <PanelIcon />
        <ChevronRight size={10} strokeWidth={3} className="text-[#666]" />
        <a href="#panel">控制面板</a>
        <ChevronRight size={10} strokeWidth={3} className="text-[#666]" />
        <a href="#all">所有控制面板项</a>
        <ChevronRight size={10} strokeWidth={3} className="text-[#666]" />
        <button aria-label="以前的位置" className="mr-3.5 ml-auto text-[#666]">
          <ChevronDown size={14} strokeWidth={1.8} />
        </button>
        <button aria-label="刷新" className="text-[#777]">
          <svg viewBox="0 0 20 20" className="size-5" fill="none" stroke="currentColor" strokeWidth="1.100">
            <path d="M15 8A5.500 5.500 0 1 0 15.500 11" />
            <path d="M15.500 4.500V8.500H11.500" />
          </svg>
        </button>
      </nav>

      <label className="ml-3 flex h-[35px] w-[202px] items-center border border-[#d9d9d9] bg-white pr-3.5 pl-[9px]">
        <input
          aria-label="搜索控制面板"
          placeholder="搜索控制面板"
          className="min-w-0 flex-1 text-xs outline-none placeholder:text-[#6d6d6d]"
        />
        <svg viewBox="0 0 12 12" className="size-3 text-[#6d6d6d]" fill="none" stroke="currentColor">
          <circle cx="7.500" cy="4.500" r="3.500" strokeWidth="1.500" />
          <path d="M5 7L0.500 11.500" strokeWidth="1.800" />
        </svg>
      </label>
    </div>
  );
}

function Header() {
  return (
    <div className="relative flex h-[62px] items-center justify-between border-b border-[#d6e1ef] pr-[84px] pl-[131px]">
      <h2 aria-label="调整计算机的设置" className="pt-0.5 text-[15px] text-[#003399]">
        置
      </h2>
      <div className="flex items-center gap-3">
        <span className="text-[13px] text-[#5a6780]">查看方式:</span>
        <button className="flex items-center gap-1.5 text-xs text-[#0066cc]">
          大图标
          <svg viewBox="0 0 8 4" className="h-1 w-2" aria-hidden="true">
            <path d="M0 0H8L4 4Z" fill="currentColor" />
          </svg>
        </button>
      </div>

      {/* Taskbar preview menu left open over the heading */}
      <div className="absolute top-6 left-px w-[136px] rounded border border-[#ececec] bg-[#f9f9f9] px-1 py-0.5 shadow-lg">
        <button className="block h-[22px] w-full rounded border border-black pl-[31px] text-left text-xs">
          关闭(<u>C</u>)
        </button>
      </div>
    </div>
  );
}

export default function App() {
  return (
    <div className="flex min-h-screen flex-col bg-[#9b9b9b] p-px font-['Noto_Sans','Noto_Sans_CJK_SC',sans-serif] text-black">
      <SharedDefs />
      <div className="flex flex-1 flex-col overflow-hidden rounded-lg bg-white">
        <TitleBar />
        <Toolbar />
        <Header />
        <div className="flex flex-1">
          <main className="flex-1 pt-[25px] pl-[19px]">
            <ul className="grid grid-cols-[repeat(auto-fill,250px)]">
              {items.map((item) => (
                <li key={item.label} className="flex h-[50px] items-center">
                  <a href={`#${item.icon}`} className="relative flex h-full items-center gap-[11px] text-[#006e12]">
                    <Icon>{icons[item.icon]}</Icon>
                    <span className="max-w-[190px] pb-0.5 text-base leading-[21px]">{item.label}</span>
                    {item.marked && (
                      <span className="absolute -top-px -right-5 bottom-px -left-[15px] rounded-sm border-2 border-[#fb3b3e]" />
                    )}
                  </a>
                </li>
              ))}
            </ul>
          </main>
          {/* Scrollbar */}
          <div className="flex w-4 flex-col items-center bg-[#f0f0f0] pt-[17px]">
            <div className="w-0.5 flex-[89] rounded bg-[#858585]" />
            <div className="flex-[11]" />
          </div>
        </div>
      </div>
    </div>
  );
}
